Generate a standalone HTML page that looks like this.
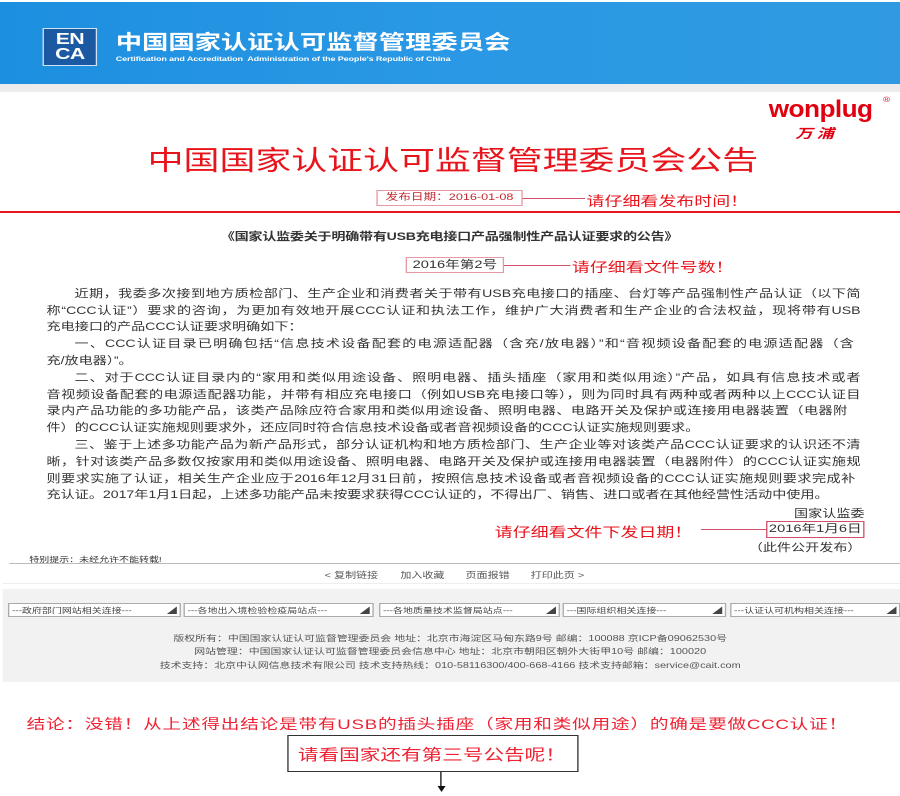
<!DOCTYPE html>
<html><head><meta charset="utf-8"><style>
html,body{margin:0;padding:0;background:#fff;width:900px;height:796px;overflow:hidden}
#c{position:absolute;left:0;top:0;width:677px;height:796px;transform:scaleX(1.33);transform-origin:0 0;font-family:"Liberation Sans","Noto Sans CJK SC",sans-serif}
.a{position:absolute;white-space:nowrap}
.band{left:0;top:2px;width:677px;height:82px;background:linear-gradient(90deg,#1d8fe0 0%,#2a98e4 50%,#2f9ae2 100%)}
.gs{left:0;top:84px;width:677px;height:8px;background:#ececec}
.logo{left:32px;top:28px;width:41px;height:38px;background:#1b5aa3;border:1px solid #cfe3f5;color:#fff;font:bold 16px/15px "Liberation Sans",sans-serif;text-align:center;padding-top:3px;box-sizing:border-box;letter-spacing:-0.5px}
.red{color:#e8141c}
.bl{left:35px;width:612px;font-size:10.6px;color:#333;text-align:justify;text-align-last:justify;line-height:13px}
.bl.l{text-align-last:left}
.sel{top:603px;height:14px;border:1px solid #aaa;background:#fff;font-size:7.5px;line-height:13px;color:#444;box-sizing:border-box;padding-left:2px}
.sel b{position:absolute;right:2px;top:0;font-weight:normal}
.ft{left:0;width:677px;text-align:center;font-size:8.2px;color:#555}
</style></head><body><div id="c">
<div class="a band"></div>
<div class="a gs"></div>
<div class="a logo">EN<br>CA</div>
<div class="a" style="left:87px;top:33px;font-size:19.8px;line-height:20px;font-weight:bold;color:#fff;letter-spacing:0">中国国家认证认可监督管理委员会</div>
<div class="a" style="left:87px;top:56px;font-size:6.8px;line-height:8px;font-weight:bold;color:#fff;letter-spacing:-0.1px">Certification and Accreditation&nbsp; Administration of the People's Republic of China</div>

<div class="a red" style="left:578px;top:96px;font-size:24px;font-weight:bold;transform:scaleX(0.82);transform-origin:0 0;letter-spacing:-0.5px;color:#e10010">wonplug</div>
<div class="a" style="left:664px;top:97px;font-size:7px;color:#e10010">®</div>
<div class="a" style="left:598px;top:123px;font-size:13px;font-weight:bold;font-style:italic;color:#e10010;letter-spacing:3px">万浦</div>

<div class="a red" style="left:111px;top:139px;font-size:27px">中国国家认证认可监督管理委员会公告</div>

<div class="a" style="left:283px;top:190px;width:110px;height:16px;border:1px solid #e79aa3;box-sizing:border-box;font-size:9.5px;line-height:14px;text-align:center;color:#c0282f">发布日期：2016-01-08</div>
<div class="a" style="left:393px;top:198px;width:47px;height:1px;background:#d0506a"></div>
<div class="a red" style="left:441px;top:190px;font-size:13.5px">请仔细看发布时间！</div>
<div class="a" style="left:0;top:211px;width:677px;height:2px;background:#e8161a"></div>

<div class="a" style="left:166px;top:229px;font-size:10.6px;font-weight:bold;color:#333;letter-spacing:-0.2px">《国家认监委关于明确带有USB充电接口产品强制性产品认证要求的公告》</div>
<div class="a" style="left:305px;top:257px;width:74px;height:16px;border:1px solid #e79aa3;box-sizing:border-box;font-size:11px;line-height:14px;text-align:center;color:#333">2016年第2号</div>
<div class="a" style="left:379px;top:265px;width:50px;height:1px;background:#d0506a"></div>
<div class="a red" style="left:430px;top:256px;font-size:13.5px">请仔细看文件号数！</div>

<div class="a bl" style="top:288px;left:56px;width:591px">近期，我委多次接到地方质检部门、生产企业和消费者关于带有USB充电接口的插座、台灯等产品强制性产品认证（以下简</div>
<div class="a bl" style="top:305px">称“CCC认证”）要求的咨询，为更加有效地开展CCC认证和执法工作，维护广大消费者和生产企业的合法权益，现将带有USB</div>
<div class="a bl l" style="top:321px">充电接口的产品CCC认证要求明确如下：</div>
<div class="a bl" style="top:338px;left:56px;width:586px">一、CCC认证目录已明确包括“信息技术设备配套的电源适配器（含充/放电器）”和“音视频设备配套的电源适配器（含</div>
<div class="a bl l" style="top:355px">充/放电器）”。</div>
<div class="a bl" style="top:372px;left:56px;width:591px">二、对于CCC认证目录内的“家用和类似用途设备、照明电器、插头插座（家用和类似用途）”产品，如具有信息技术或者</div>
<div class="a bl" style="top:389px">音视频设备配套的电源适配器功能，并带有相应充电接口（例如USB充电接口等），则为同时具有两种或者两种以上CCC认证目</div>
<div class="a bl" style="top:405px;width:602px">录内产品功能的多功能产品，该类产品除应符合家用和类似用途设备、照明电器、电路开关及保护或连接用电器装置（电器附</div>
<div class="a bl l" style="top:422px">件）的CCC认证实施规则要求外，还应同时符合信息技术设备或者音视频设备的CCC认证实施规则要求。</div>
<div class="a bl" style="top:439px;left:56px;width:591px">三、鉴于上述多功能产品为新产品形式，部分认证机构和地方质检部门、生产企业等对该类产品CCC认证要求的认识还不清</div>
<div class="a bl" style="top:456px">晰，针对该类产品多数仅按家用和类似用途设备、照明电器、电路开关及保护或连接用电器装置（电器附件）的CCC认证实施规</div>
<div class="a bl" style="top:473px;width:608px">则要求实施了认证，相关生产企业应于2016年12月31日前，按照信息技术设备或者音视频设备的CCC认证实施规则要求完成补</div>
<div class="a bl l" style="top:489px">充认证。2017年1月1日起，上述多功能产品未按要求获得CCC认证的，不得出厂、销售、进口或者在其他经营性活动中使用。</div>
<div class="a" style="left:580px;top:506px;font-size:10.6px;color:#333;width:70px;text-align:right">国家认监委</div>
<div class="a red" style="left:372px;top:521px;font-size:13.5px">请仔细看文件下发日期！</div>
<div class="a" style="left:527px;top:529px;width:49px;height:1px;background:#d0506a"></div>
<div class="a" style="left:576px;top:521px;width:74px;height:17px;border:1px solid #d0506a;box-sizing:border-box;font-size:11px;line-height:15px;text-align:center;color:#333">2016年1月6日</div>
<div class="a" style="left:563px;top:540px;font-size:10.6px;color:#333">（此件公开发布）</div>

<div class="a" style="left:22px;top:554px;font-size:7.5px;color:#333">特别提示：未经允许不能转载!</div>
<div class="a" style="left:7px;top:563px;width:670px;height:1px;background:#bbb"></div>
<div class="a" style="left:244px;top:569px;font-size:8.3px;color:#555">&lt; 复制链接</div>
<div class="a" style="left:301px;top:569px;font-size:8.3px;color:#555">加入收藏</div>
<div class="a" style="left:350px;top:569px;font-size:8.3px;color:#555">页面报错</div>
<div class="a" style="left:399px;top:569px;font-size:8.3px;color:#555">打印此页 &gt;</div>
<div class="a" style="left:2px;top:583px;width:675px;height:1px;background:#eee"></div>
<div class="a" style="left:2px;top:589px;width:675px;height:93px;background:#f2f2f2"></div>
<div class="a sel" style="left:6px;width:130px">---政府部门网站相关连接---<b>◢</b></div>
<div class="a sel" style="left:138px;width:143px">---各地出入境检验检疫局站点---<b>◢</b></div>
<div class="a sel" style="left:285px;width:136px">---各地质量技术监督局站点---<b>◢</b></div>
<div class="a sel" style="left:423px;width:123px">---国际组织相关连接---<b>◢</b></div>
<div class="a sel" style="left:549px;width:128px">---认证认可机构相关连接---<b>◢</b></div>
<div class="a ft" style="top:632px">版权所有：中国国家认证认可监督管理委员会 地址：北京市海淀区马甸东路9号 邮编：100088 京ICP备09062530号</div>
<div class="a ft" style="top:645px">网站管理：中国国家认证认可监督管理委员会信息中心 地址：北京市朝阳区朝外大街甲10号 邮编：100020</div>
<div class="a ft" style="top:659px">技术支持：北京中认网信息技术有限公司 技术支持热线：010-58116300/400-668-4166 技术支持邮箱：service@cait.com</div>

<div class="a" style="left:20px;top:714px;font-size:14px;color:#ee2233;letter-spacing:0.6px">结论：没错！从上述得出结论是带有USB的插头插座（家用和类似用途）的确是要做CCC认证！</div>
<div class="a" style="left:216px;top:735px;width:219px;height:37px;border:1.5px solid #333;box-sizing:border-box"></div>
<div class="a" style="left:224px;top:743px;font-size:15.5px;color:#ee2233">请看国家还有第三号公告呢！</div>
<div class="a" style="left:331px;top:772px;width:1px;height:18px;background:#111"></div>
<div class="a" style="left:328.5px;top:786px;width:0;height:0;border-left:3px solid transparent;border-right:3px solid transparent;border-top:6px solid #111"></div>
</div></body></html>
